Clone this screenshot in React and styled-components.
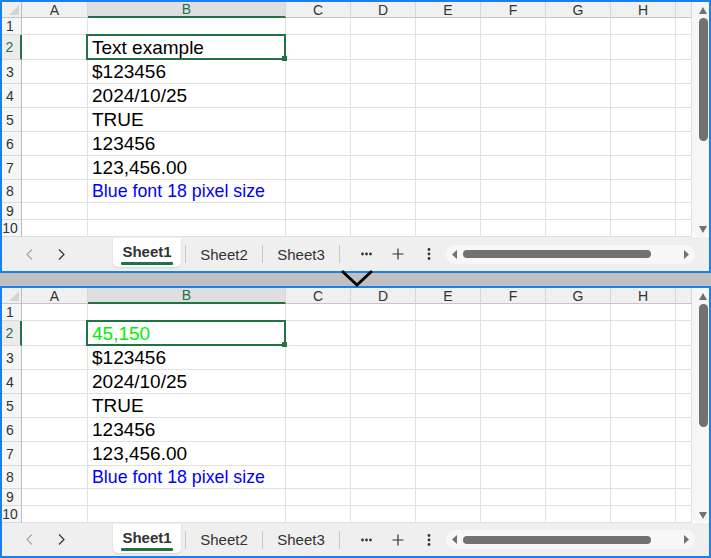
import React from "react"
import styled, { createGlobalStyle } from "styled-components"

const GlobalStyle = createGlobalStyle`
  html, body {
    margin: 0;
    padding: 0;
  }
  body {
    width: 711px;
    height: 558px;
    overflow: hidden;
    background: #ffffff;
    font-family: "Liberation Sans", Arial, sans-serif;
  }
`

const COLS = ["A", "B", "C", "D", "E", "F", "G", "H"]
const ROW_HEIGHTS = [17, 25, 24, 24, 24, 24, 24, 23, 17, 17]
const GREEN = "#217346"

const Page = styled.div`
  display: flex;
  flex-direction: column;
  width: 711px;
`
const Panel = styled.div`
  box-sizing: border-box;
  height: ${props => props.$h}px;
  border: 2px solid #1a80ee;
  background: #efefef;
  display: flex;
  flex-direction: column;
  overflow: hidden;
`
const GridArea = styled.div`
  display: flex;
  height: 235px;
  flex: none;
  background: #ffffff;
`
const Grid = styled.div`
  display: grid;
  grid-template-columns: 20px 66px 198px repeat(6, 65px) 16px;
  grid-template-rows: 16px ${ROW_HEIGHTS.map(h => h + "px").join(" ")};
  width: 690px;
  height: 235px;
  overflow: hidden;
`
const Corner = styled.div`
  position: relative;
  background: #f0f0f0;
  border-right: 1px solid #bdbdbd;
  border-bottom: 1px solid #c6c6c6;
  &::after {
    content: "";
    position: absolute;
    right: 2px;
    bottom: 2px;
    border-left: 10px solid transparent;
    border-bottom: 10px solid #d4d4d4;
  }
`
const ColHead = styled.div`
  box-sizing: border-box;
  background: ${props => (props.$active ? "#dfdfdf" : "#f0f0f0")};
  border-right: 1px solid #d6d6d6;
  border-bottom: ${props => (props.$active ? `2px solid ${GREEN}` : "1px solid #c6c6c6")};
  color: ${props => (props.$active ? GREEN : "#333")};
  font-size: 14px;
  display: flex;
  align-items: center;
  justify-content: center;
`
const RowHead = styled.div`
  box-sizing: border-box;
  background: ${props => (props.$active ? "#ececec" : "#f6f6f6")};
  border-right: ${props => (props.$active ? `2px solid ${GREEN}` : "1px solid #bdbdbd")};
  border-bottom: 1px solid #dadada;
  color: ${props => (props.$active ? GREEN : "#333")};
  font-size: 14px;
  padding-right: 3px;
  display: flex;
  align-items: center;
  justify-content: center;
`
const Cell = styled.div`
  box-sizing: border-box;
  position: relative;
  border-right: 1px solid #e1e1e1;
  border-bottom: 1px solid #e1e1e1;
  color: ${props => props.$color || "#000"};
  font-size: ${props => (props.$small ? "17.8px" : "19px")};
  padding: 1px 0 0 4px;
  white-space: nowrap;
  display: flex;
  align-items: center;
  ${props =>
    props.$selected &&
    `
    &::after {
      content: "";
      position: absolute;
      left: -2px;
      top: -1px;
      right: -1px;
      bottom: -1px;
      border: 2px solid ${GREEN};
      z-index: 2;
    }
    &::before {
      content: "";
      position: absolute;
      right: -2px;
      bottom: -2px;
      width: 5px;
      height: 5px;
      background: ${GREEN};
      z-index: 3;
    }
  `}
`
const VScroll = styled.div`
  width: 17px;
  box-sizing: border-box;
  padding: 5px 0 0 5px;
  background: #f6f6f6;
  border-radius: 0 0 8px 8px;
  display: flex;
  flex-direction: column;
  align-items: center;
`
const VThumb = styled.div`
  width: 9px;
  height: 123px;
  margin-top: 4px;
  border-radius: 5px;
  background: #717171;
`
const Spacer = styled.div`
  flex: 1;
`
const TabBar = styled.div`
  flex: 1;
  display: flex;
  align-items: center;
  padding-left: 11px;
  background: #efefef;
`
const NavButton = styled.div`
  width: 32px;
  display: flex;
  justify-content: center;
  align-items: center;
`
const Tabs = styled.div`
  display: flex;
  align-items: center;
  align-self: stretch;
  margin-left: 36px;
`
const Tab = styled.div`
  width: 68px;
  height: ${props => (props.$active ? "29px" : "auto")};
  align-self: ${props => (props.$active ? "flex-start" : "center")};
  margin-top: ${props => (props.$active ? "1px" : "0")};
  box-sizing: border-box;
  background: ${props => (props.$active ? "#ffffff" : "transparent")};
  border-radius: 0 0 5px 5px;
  box-shadow: ${props => (props.$active ? "0 1px 2px rgba(0,0,0,0.12)" : "none")};
  color: #333;
  font-size: 15px;
  font-weight: ${props => (props.$active ? 700 : 400)};
  display: flex;
  flex-direction: column;
  align-items: center;
  justify-content: center;
  padding-top: ${props => (props.$active ? "2px" : "0")};
`
const Underline = styled.div`
  width: 52px;
  height: 3px;
  margin-top: 2px;
  border-radius: 1px;
  background: ${GREEN};
`
const Divider = styled.div`
  width: 1px;
  height: 18px;
  margin: 0 4px;
  background: #c8c8c8;
`
const ToolButton = styled.div`
  width: 31px;
  display: flex;
  justify-content: center;
  align-items: center;
  color: #333;
`
const Tools = styled.div`
  display: flex;
  margin-left: 7px;
`
const HTrack = styled.div`
  width: 249px;
  height: 19px;
  margin-left: 2px;
  box-sizing: border-box;
  padding: 0 6px;
  border-radius: 10px;
  background: #f7f7f7;
  display: flex;
  align-items: center;
`
const HThumb = styled.div`
  width: 188px;
  height: 8px;
  margin-left: 6px;
  border-radius: 4px;
  background: #717171;
`
const Separator = styled.div`
  position: relative;
  z-index: 5;
  height: 13px;
  background: #c0c0c0;
`
const Chevron = styled.svg`
  position: absolute;
  left: 338px;
  top: -6px;
`

const Tri = ({ dir }) => {
  const pts = {
    up: "0,7 4,0 8,7",
    down: "0,0 8,0 4,7",
    left: "5,0 5,9 0,4.5",
    right: "0,0 0,9 5,4.5",
  }[dir]
  const vertical = dir === "up" || dir === "down"
  return (
    <svg width={vertical ? 8 : 5} height={vertical ? 7 : 9} viewBox={vertical ? "0 0 8 7" : "0 0 5 9"}>
      <polygon points={pts} fill="#717171" />
    </svg>
  )
}

const Sheet = ({ height, first, firstColor }) => {
  const rows = [
    { n: 1, b: "" },
    { n: 2, b: first, color: firstColor },
    { n: 3, b: "$123456" },
    { n: 4, b: "2024/10/25" },
    { n: 5, b: "TRUE" },
    { n: 6, b: "123456" },
    { n: 7, b: "123,456.00" },
    { n: 8, b: "Blue font 18 pixel size", color: "#0000ff", small: true },
    { n: 9, b: "" },
    { n: 10, b: "" },
  ]
  return (
    <Panel $h={height}>
      <GridArea>
        <Grid>
          <Corner />
          {COLS.map(c => (
            <ColHead key={c} $active={c === "B"}>
              {c}
            </ColHead>
          ))}
          <ColHead />
          {rows.map(r => (
            <React.Fragment key={r.n}>
              <RowHead $active={r.n === 2}>{r.n}</RowHead>
              <Cell />
              <Cell $selected={r.n === 2} $color={r.color} $small={r.small}>
                {r.b}
              </Cell>
              {[0, 1, 2, 3, 4, 5, 6].map(i => (
                <Cell key={i} />
              ))}
            </React.Fragment>
          ))}
        </Grid>
        <VScroll>
          <Tri dir="up" />
          <VThumb />
          <Spacer />
          <Tri dir="down" />
          <div style={{ height: 4 }} />
        </VScroll>
      </GridArea>
      <TabBar>
        <NavButton>
          <svg width="7" height="11" viewBox="0 0 7 11">
            <polyline points="6,0.5 1,5.5 6,10.5" fill="none" stroke="#a6a6a6" strokeWidth="1.2" />
          </svg>
        </NavButton>
        <NavButton>
          <svg width="7" height="11" viewBox="0 0 7 11">
            <polyline points="1,0.5 6,5.5 1,10.5" fill="none" stroke="#333" strokeWidth="1.2" />
          </svg>
        </NavButton>
        <Tabs>
          <Tab $active>
            Sheet1
            <Underline />
          </Tab>
          <Divider />
          <Tab>Sheet2</Tab>
          <Divider />
          <Tab>Sheet3</Tab>
          <Divider />
        </Tabs>
        <Tools>
          <ToolButton>
            <svg width="11" height="4" viewBox="0 0 11 4">
              <circle cx="1.5" cy="2" r="1.4" fill="#333" />
              <circle cx="5.5" cy="2" r="1.4" fill="#333" />
              <circle cx="9.5" cy="2" r="1.4" fill="#333" />
            </svg>
          </ToolButton>
          <ToolButton>
            <svg width="12" height="12" viewBox="0 0 12 12">
              <path d="M6 0.5V11.5M0.5 6H11.5" stroke="#333" strokeWidth="1.2" />
            </svg>
          </ToolButton>
          <ToolButton>
            <svg width="4" height="12" viewBox="0 0 4 12">
              <circle cx="2" cy="1.5" r="1.4" fill="#333" />
              <circle cx="2" cy="6" r="1.4" fill="#333" />
              <circle cx="2" cy="10.5" r="1.4" fill="#333" />
            </svg>
          </ToolButton>
        </Tools>
        <HTrack>
          <Tri dir="left" />
          <HThumb />
          <Spacer />
          <Tri dir="right" />
        </HTrack>
      </TabBar>
    </Panel>
  )
}

const App = () => (
  <Page>
    <GlobalStyle />
    <Sheet height={273} first="Text example" />
    <Separator>
      <Chevron width="38" height="22" viewBox="0 0 38 22">
        <polyline points="4,4 19,18 34,4" fill="none" stroke="#000" strokeWidth="3" />
      </Chevron>
    </Separator>
    <Sheet height={272} first="45,150" firstColor="#00f000" />
  </Page>
)

export default App
